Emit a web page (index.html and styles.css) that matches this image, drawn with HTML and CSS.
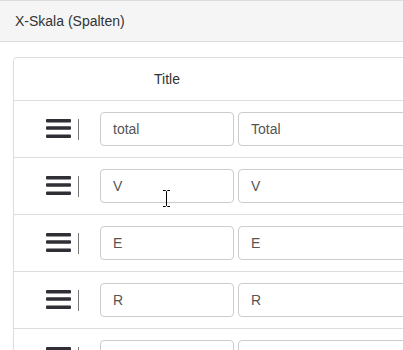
FILE: index.html
```html
<!DOCTYPE html>
<html>
<head>
    <meta charset="UTF-8">
    <title>X-Skala</title>
    <link rel="stylesheet" href="styles.css">
</head>
<body>
    <div class="panel-heading">X-Skala (Spalten)</div>

    <div class="panel-body">
        <div class="table-panel">
            <div class="row head-row">
                <div class="handle-cell"></div>
                <div class="col-title">Title</div>
            </div>

            <div class="row">
                <div class="handle-cell">
                    <svg class="bars" width="25" height="20" viewBox="0 0 25 20"><rect x="0" y="0" width="25" height="3.6" rx="1"/><rect x="0" y="7.2" width="25" height="3.6" rx="1"/><rect x="0" y="15.4" width="25" height="3.6" rx="1"/></svg>
                    <span class="sep"></span>
                </div>
                <input class="field key" type="text" value="total">
                <input class="field label" type="text" value="Total">
            </div>

            <div class="row">
                <div class="handle-cell">
                    <svg class="bars" width="25" height="20" viewBox="0 0 25 20"><rect x="0" y="0" width="25" height="3.6" rx="1"/><rect x="0" y="7.2" width="25" height="3.6" rx="1"/><rect x="0" y="15.4" width="25" height="3.6" rx="1"/></svg>
                    <span class="sep"></span>
                </div>
                <input class="field key" type="text" value="V">
                <input class="field label" type="text" value="V">
            </div>

            <div class="row">
                <div class="handle-cell">
                    <svg class="bars" width="25" height="20" viewBox="0 0 25 20"><rect x="0" y="0" width="25" height="3.6" rx="1"/><rect x="0" y="7.2" width="25" height="3.6" rx="1"/><rect x="0" y="15.4" width="25" height="3.6" rx="1"/></svg>
                    <span class="sep"></span>
                </div>
                <input class="field key" type="text" value="E">
                <input class="field label" type="text" value="E">
            </div>

            <div class="row">
                <div class="handle-cell">
                    <svg class="bars" width="25" height="20" viewBox="0 0 25 20"><rect x="0" y="0" width="25" height="3.6" rx="1"/><rect x="0" y="7.2" width="25" height="3.6" rx="1"/><rect x="0" y="15.4" width="25" height="3.6" rx="1"/></svg>
                    <span class="sep"></span>
                </div>
                <input class="field key" type="text" value="R">
                <input class="field label" type="text" value="R">
            </div>

            <div class="row">
                <div class="handle-cell">
                    <svg class="bars" width="25" height="20" viewBox="0 0 25 20"><rect x="0" y="0" width="25" height="3.6" rx="1"/><rect x="0" y="7.2" width="25" height="3.6" rx="1"/><rect x="0" y="15.4" width="25" height="3.6" rx="1"/></svg>
                    <span class="sep"></span>
                </div>
                <input class="field key" type="text" value="">
                <input class="field label" type="text" value="">
            </div>
        </div>
    </div>

    <!-- mouse cursor visible in the screenshot -->
    <svg class="cursor" width="9" height="17" viewBox="0 0 9 17">
        <path d="M1 0.5h2.5l1 1 1-1H8M4.5 1.5v14M1 16.5h2.5l1-1 1 1H8" fill="none" stroke="#000" stroke-width="1"/>
    </svg>
</body>
</html>
```

FILE: styles.css
```css
body {
    margin: 0;
    font-family: "Liberation Sans", Arial, sans-serif;
    font-size: 14px;
    color: #333;
    background-color: #fff;
    overflow: hidden;
    width: 403px;
    height: 350px;
}

.panel-heading {
    background-color: #f5f5f5;
    border-top: 1px solid #ddd;
    border-bottom: 1px solid #ddd;
    padding: 10px 15px;
    line-height: 20px;
}

.panel-body {
    padding: 15px 0 0 13px;
}

.table-panel {
    width: 460px;
    border: 1px solid #ddd;
    border-radius: 4px;
}

.row {
    display: flex;
    align-items: center;
    height: 56px;
    border-bottom: 1px solid #ddd;
}

.head-row {
    height: 42px;
}

.handle-cell {
    width: 54px;
    padding-left: 32px;
    display: flex;
    align-items: center;
    flex-shrink: 0;
}

.bars {
    fill: #2f2f35;
    display: block;
}

.sep {
    display: block;
    width: 1px;
    height: 21px;
    margin-left: 7px;
    background-color: #777;
}

.col-title {
    width: 134px;
    text-align: center;
    line-height: 20px;
}

.field {
    box-sizing: border-box;
    height: 34px;
    padding: 6px 12px;
    border: 1px solid #ccc;
    border-radius: 4px;
    font-family: "Liberation Sans", Arial, sans-serif;
    font-size: 14px;
    color: #555;
    background-color: #fff;
    margin: 0;
}

.key {
    width: 134px;
    margin-right: 4px;
}

.label {
    width: 220px;
}

.cursor {
    position: absolute;
    left: 162px;
    top: 190px;
}
```
